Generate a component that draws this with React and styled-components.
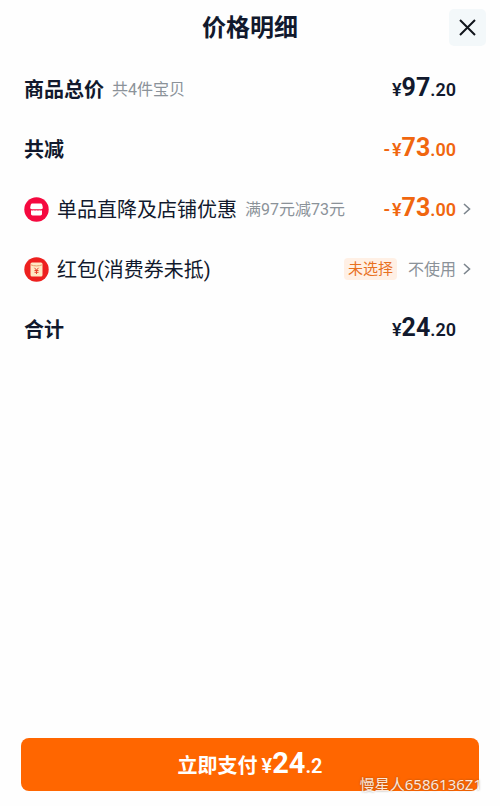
import React from "react";
import styled, { createGlobalStyle } from "styled-components";

const GlobalStyle = createGlobalStyle`
  * { box-sizing: border-box; }
  body {
    margin: 0;
    background: #fefefe;
    color: #11192d;
    font-family: Roboto, "Noto Sans CJK SC", sans-serif;
  }
  button { font: inherit; color: inherit; border: 0; padding: 0; background: none; cursor: pointer; }
`;

const Sheet = styled.main`
  min-height: 100vh;
  display: flex;
  flex-direction: column;
`;

const Header = styled.header`
  display: grid;
  grid-template-columns: 1fr auto 1fr;
  align-items: center;
  padding: 8px 14px 0;
`;

const Title = styled.h1`
  grid-column: 2;
  margin: 0;
  padding-top: 2px;
  font-size: 24px;
  line-height: 36px;
  font-weight: 700;
`;

const CloseButton = styled.button`
  justify-self: end;
  width: 37px;
  height: 37px;
  display: grid;
  place-items: center;
  border-radius: 5px;
  background: #f3f8fa;
`;

const Rows = styled.ul`
  flex: 1;
  list-style: none;
  margin: 0;
  padding: 13px 24px 0;
`;

const Row = styled.li`
  height: 60px;
  display: flex;
  align-items: center;
  justify-content: space-between;
`;

const Side = styled.div`
  display: flex;
  align-items: center;
  gap: 8px;
  white-space: nowrap;
`;

const Label = styled.span`
  padding-top: 2px;
  font-size: 20px;
  line-height: 30px;
  font-weight: ${(p) => (p.$strong ? 700 : 400)};
`;

const Note = styled.span`
  padding-top: 2px;
  font-size: 16px;
  line-height: 30px;
  color: #8b9299;
`;

const Value = styled.div`
  padding-right: 20px;
`;

const OpenButton = styled.button`
  margin-right: 5px;
  display: flex;
  align-items: center;
  gap: 7px;
`;

const Tag = styled.span`
  margin-right: 4px;
  padding: 0 4px;
  border-radius: 4px;
  background: #fff0e5;
  color: #e8711f;
  font-size: 15px;
  line-height: 22px;
`;

const Amount = styled.span`
  display: inline-flex;
  align-items: baseline;
  color: ${(p) => p.$color || "inherit"};
  font-size: ${(p) => (p.$large ? 20 : 18)}px;
  line-height: 30px;
  font-weight: 600;
`;

const Whole = styled.span`
  font-size: ${(p) => (p.$large ? 29 : 25)}px;
  font-weight: 700;
`;

const Sign = styled.span`
  margin-right: 2px;
`;

const Footer = styled.footer`
  position: relative;
  padding: 0 21px 15px;
`;

const PayButton = styled.button`
  width: 100%;
  height: 53px;
  display: flex;
  align-items: center;
  justify-content: center;
  gap: 4px;
  border-radius: 8px;
  background: #ff6600;
  color: #fff;
`;

const Watermark = styled.span`
  position: absolute;
  right: 18px;
  bottom: 11px;
  color: #fff;
  opacity: 0.85;
  font-family: "Noto Sans", "Noto Sans CJK SC", sans-serif;
  font-size: 15px;
  line-height: 22px;
  text-shadow: 0 0 2px rgba(70, 60, 50, 0.7);
  pointer-events: none;
`;

function CloseIcon() {
  return (
    <svg width="17" height="17" viewBox="0 0 17 17" fill="none" stroke="#11151c" strokeWidth="2" aria-hidden="true">
      <path d="M1 1 16 16M16 1 1 16" />
    </svg>
  );
}

function Chevron() {
  return (
    <svg width="8" height="12" viewBox="0 0 8 12" fill="none" stroke="#7c858d" strokeWidth="1.6" aria-hidden="true">
      <path d="M1 1 6.5 6 1 11" />
    </svg>
  );
}

function ShopIcon() {
  return (
    <svg width="25" height="25" viewBox="0 0 25 25" aria-hidden="true">
      <circle cx="12.5" cy="12.5" r="12.2" fill="#f5093f" />
      <path d="M8.5 6.5h8c1.1 0 1.6.6 1.8 1.6l.5 2.5c.1 1-.6 1.6-1.6 1.6H7.8c-1 0-1.7-.6-1.6-1.6l.5-2.5c.2-1 .7-1.6 1.8-1.6Z" fill="#fff" />
      <path d="M7 13.3c.8.4 1.8.4 2.7 0 .9.4 1.9.4 2.8 0 .9.4 1.9.4 2.8 0 .9.4 1.9.4 2.7 0v3.5c0 1-.6 1.6-1.6 1.6H8.600c-1 0-1.600-.6-1.600-1.600Z" fill="#fff" />
    </svg>
  );
}

function PacketIcon() {
  return (
    <svg width="25" height="25" viewBox="0 0 25 25" aria-hidden="true">
      <circle cx="12.5" cy="12.5" r="12.2" fill="#ed201f" />
      <rect x="6.5" y="5.5" width="12" height="14" rx="1.5" fill="#ffe9c4" />
      <path d="M6.8 7.8c3.5 1.5 7.9 1.5 11.4 0" fill="none" stroke="#e99a69" strokeWidth="1" />
      <path d="M10.5 10.8 12.5 13.2 14.5 10.8M12.5 13v4M10.5 13.5h4M10.5 15.3h4" fill="none" stroke="#e8442d" strokeWidth="1" />
    </svg>
  );
}

function Price({ sign, whole, cents, color, large }) {
  return (
    <Amount $color={color} $large={large}>
      {sign && <Sign>{sign}</Sign>}¥<Whole $large={large}>{whole}</Whole>.{cents}
    </Amount>
  );
}

const ORANGE = "#f0660f";

export default function App() {
  return (
    <Sheet>
      <GlobalStyle />
      <Header>
        <Title>价格明细</Title>
        <CloseButton type="button" aria-label="关闭"><CloseIcon /></CloseButton>
      </Header>
      <Rows>
        <Row>
          <Side>
            <Label $strong>商品总价</Label>
            <Note>共4件宝贝</Note>
          </Side>
          <Value><Price whole="97" cents="20" /></Value>
        </Row>
        <Row>
          <Label $strong>共减</Label>
          <Value><Price sign="-" whole="73" cents="00" color={ORANGE} /></Value>
        </Row>
        <Row>
          <Side>
            <ShopIcon />
            <Label>单品直降及店铺优惠</Label>
            <Note>满97元减73元</Note>
          </Side>
          <OpenButton type="button">
            <Price sign="-" whole="73" cents="00" color={ORANGE} />
            <Chevron />
          </OpenButton>
        </Row>
        <Row>
          <Side>
            <PacketIcon />
            <Label>红包(消费券未抵)</Label>
          </Side>
          <OpenButton type="button">
            <Tag>未选择</Tag>
            <Note>不使用</Note>
            <Chevron />
          </OpenButton>
        </Row>
        <Row>
          <Label $strong>合计</Label>
          <Value><Price whole="24" cents="20" /></Value>
        </Row>
      </Rows>
      <Footer>
        <PayButton type="button">
          <Label $strong>立即支付</Label>
          <Price whole="24" cents="2" large />
        </PayButton>
        <Watermark>慢星人6586136Z1</Watermark>
      </Footer>
    </Sheet>
  );
}
